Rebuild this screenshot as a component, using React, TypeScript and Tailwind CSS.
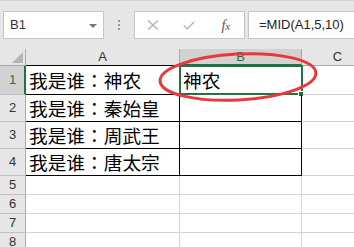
import React from 'react';

const names = ['神农', '秦始皇', '周武王', '唐太宗'];

function Who({ name }: { name: string }) {
  // colon from the TC face: its fullwidth punctuation sits centred, as in the screenshot
  return (
    <span>
      我是谁<span className="font-['Noto_Sans_CJK_TC',sans-serif]">：</span>
      {name}
    </span>
  );
}

function HeaderRow() {
  return (
    <div className="flex h-[17px] bg-[#e6e6e6] text-[13px] text-[#333]">
      <div className="w-[26px] shrink-0 border-r border-b border-[#ababab] flex items-end justify-end pr-[2px] pb-[2px]">
        <div className="w-0 h-0 border-l-[11px] border-l-transparent border-b-[11px] border-b-[#b4b4b4]" />
      </div>
      <div className="w-[154px] shrink-0 border-r border-[#ababab] border-b border-b-black flex items-center justify-center">
        A
      </div>
      <div className="w-[122px] shrink-0 bg-[#d2d2d2] border-r border-[#ababab] border-b-2 border-b-[#217346] flex items-center justify-center text-[#217346]">
        B
      </div>
      <div className="w-[72px] shrink-0 border-r border-b border-[#ababab] flex items-center justify-center">
        C
      </div>
      <div className="flex-1 border-b border-[#ababab]" />
    </div>
  );
}

function DataRow({ n, height, name, selected }: { n: number; height: string; name?: string; selected?: boolean }) {
  const boxed = n <= 4;
  return (
    <div className={`flex ${height}`}>
      <div
        className={
          selected
            ? 'w-[26px] shrink-0 bg-[#d2d2d2] border-r-2 border-r-[#217346] border-b border-b-[#c0c0c0] flex items-center justify-center text-[13px] text-[#217346] pl-[1px]'
            : 'w-[26px] shrink-0 bg-[#e6e6e6] border-r border-r-[#ababab] border-b border-b-[#c0c0c0] flex items-center justify-center text-[13px] text-[#333]'
        }
      >
        {n}
      </div>
      <div
        className={
          boxed
            ? "w-[154px] shrink-0 border-r border-b border-black flex items-center pl-[3px] text-[18.7px] text-black font-['Noto_Sans_CJK_SC',sans-serif] leading-none whitespace-nowrap"
            : 'w-[154px] shrink-0 border-r border-b border-[#d4d4d4]'
        }
      >
        {name && <Who name={name} />}
      </div>
      <div
        className={
          boxed
            ? "relative w-[122px] shrink-0 border-r border-b border-black flex items-center pl-[3px] text-[18.7px] text-black font-['Noto_Sans_CJK_SC',sans-serif] leading-none"
            : 'w-[122px] shrink-0 border-r border-b border-[#d4d4d4]'
        }
      >
        {selected && (
          <>
            <span>神农</span>
            <div className="absolute -left-[1px] -top-[1px] -right-[2px] -bottom-[1px] border-2 border-[#217346]" />
            <div className="absolute -right-[3px] -bottom-[3px] w-[6px] h-[6px] bg-[#217346] border border-white" />
          </>
        )}
      </div>
      <div className="w-[72px] shrink-0 border-r border-b border-[#d4d4d4]" />
      <div className="flex-1 border-b border-[#d4d4d4]" />
    </div>
  );
}

export default function App() {
  return (
    <div className="relative w-[354px] h-[247px] overflow-hidden bg-white font-['Liberation_Sans',sans-serif]">
      {/* formula bar */}
      <div className="h-[49px] bg-[#e6e6e6] border-t border-[#d4d4d4] flex items-start pt-[10px] pl-[3px]">
        <div className="w-[101px] h-[28px] shrink-0 bg-white border border-[#c6c6c6] flex items-center justify-between pl-[6px] pr-[6px] text-[13px] text-[#333]">
          <span>B1</span>
          <div className="w-0 h-0 border-l-[4px] border-l-transparent border-r-[4px] border-r-transparent border-t-[4px] border-t-[#777] mt-[1px]" />
        </div>
        <div className="w-[30px] h-[28px] shrink-0 flex flex-col items-center justify-center gap-[2px]">
          <div className="w-[2px] h-[2px] bg-[#9a9a9a]" />
          <div className="w-[2px] h-[2px] bg-[#9a9a9a]" />
          <div className="w-[2px] h-[2px] bg-[#9a9a9a]" />
        </div>
        <div className="w-[111px] h-[28px] shrink-0 bg-white border border-[#c6c6c6] flex items-center">
          <div className="w-[37px] flex justify-center">
            <svg width="12" height="10" viewBox="0 0 12 10">
              <path d="M1 0.5 L11 9.5 M11 0.5 L1 9.5" stroke="#b4b4b4" strokeWidth="1.4" fill="none" />
            </svg>
          </div>
          <div className="w-[37px] flex justify-center">
            <svg width="12" height="9" viewBox="0 0 12 9">
              <path d="M0.8 4.5 L4.3 8 L11.2 0.8" stroke="#b4b4b4" strokeWidth="1.4" fill="none" />
            </svg>
          </div>
          <div className="w-[37px] flex justify-center items-baseline font-['Liberation_Serif',serif] italic text-[#555]">
            <span className="text-[14px]">f</span>
            <span className="text-[11px]">x</span>
          </div>
        </div>
        <div className="flex-1 h-[28px] ml-[3px] -mr-[2px] bg-white border border-[#c6c6c6] flex items-center pl-[10px] text-[13px] text-[#222]">
          =MID(A1,5,10)
        </div>
      </div>

      {/* sheet */}
      <HeaderRow />
      <DataRow n={1} height="h-[29px]" name={names[0]} selected />
      <DataRow n={2} height="h-[27px]" name={names[1]} />
      <DataRow n={3} height="h-[27px]" name={names[2]} />
      <DataRow n={4} height="h-[27px]" name={names[3]} />
      <DataRow n={5} height="h-[19px]" />
      <DataRow n={6} height="h-[19px]" />
      <DataRow n={7} height="h-[19px]" />
      <DataRow n={8} height="h-[19px]" />

      {/* red annotation */}
      <svg className="absolute inset-0 pointer-events-none" width="354" height="247" viewBox="0 0 354 247">
        <ellipse cx="238" cy="77" rx="78" ry="23" transform="rotate(-3 238 77)" stroke="#e8383b" strokeWidth="3" fill="none" />
      </svg>
    </div>
  );
}
